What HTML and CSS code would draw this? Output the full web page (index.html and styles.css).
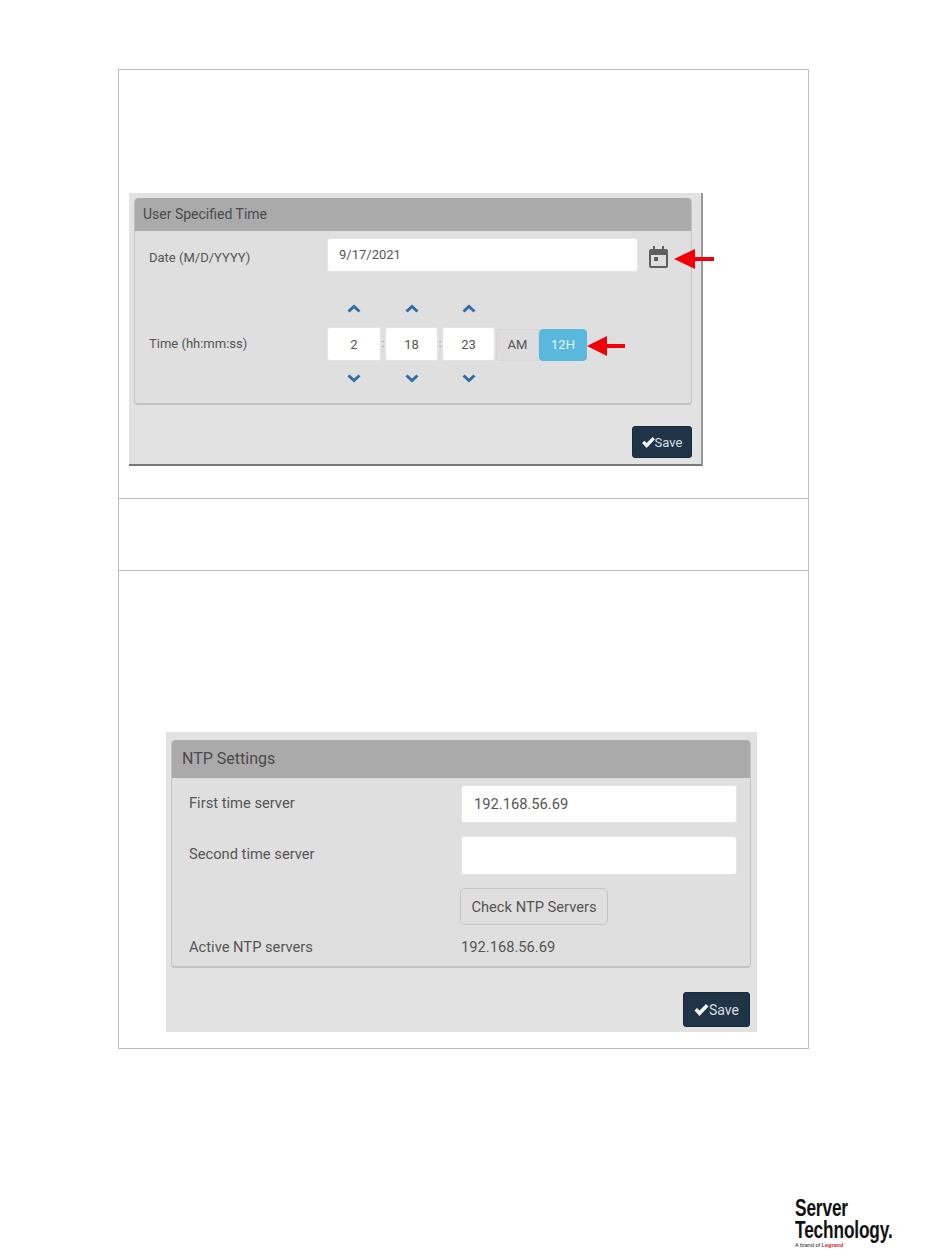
FILE: index.html
```html
<!DOCTYPE html>
<html lang="en">
<head>
    <meta charset="UTF-8">
    <title>User Specified Time and NTP Settings</title>
    <link rel="stylesheet" href="styles.css">
</head>
<body>
    <div class="frame">
        <div class="row row-first">
            <div class="shot shot-time">
                <div class="panel">
                    <div class="panel-head">User Specified Time</div>
                    <div class="panel-body">
                        <div class="date-row">
                            <label class="label">Date (M/D/YYYY)</label>
                            <input class="field" type="text" value="9/17/2021">
                            <svg class="cal" viewBox="0 0 19 22" width="19" height="22">
                                <path fill="#5f5f5f" d="M4 0h2v3h7V0h2v3h2a2 2 0 0 1 2 2v15a2 2 0 0 1-2 2H2a2 2 0 0 1-2-2V5a2 2 0 0 1 2-2h2zM2 9v11h15V9z"/>
                                <rect fill="#5f5f5f" x="5" y="11" width="4" height="4"/>
                            </svg>
                        </div>
                        <div class="time-row">
                            <label class="label">Time (hh:mm:ss)</label>
                            <div class="spin spin-wide">
                                <svg class="chev" viewBox="0 0 14 9" width="14" height="9"><path d="M1.500 7.500 7 2.500l5.500 5"/></svg>
                                <input class="field field-num" type="text" value="2">
                                <svg class="chev" viewBox="0 0 14 9" width="14" height="9"><path d="M1.500 1.500 7 6.500l5.500-5"/></svg>
                            </div>
                            <span class="sep">:</span>
                            <div class="spin">
                                <svg class="chev" viewBox="0 0 14 9" width="14" height="9"><path d="M1.500 7.500 7 2.500l5.500 5"/></svg>
                                <input class="field field-num" type="text" value="18">
                                <svg class="chev" viewBox="0 0 14 9" width="14" height="9"><path d="M1.500 1.500 7 6.500l5.500-5"/></svg>
                            </div>
                            <span class="sep">:</span>
                            <div class="spin">
                                <svg class="chev" viewBox="0 0 14 9" width="14" height="9"><path d="M1.500 7.500 7 2.500l5.500 5"/></svg>
                                <input class="field field-num" type="text" value="23">
                                <svg class="chev" viewBox="0 0 14 9" width="14" height="9"><path d="M1.500 1.500 7 6.500l5.500-5"/></svg>
                            </div>
                            <button class="btn-am" type="button">AM</button>
                            <button class="btn-12h" type="button">12H</button>
                        </div>
                    </div>
                </div>
                <div class="actions">
                    <button class="btn-save" type="button">
                        <svg class="tick" viewBox="0 0 14 12" width="13" height="11"><path d="M0 6.500 2.500 4l2.500 2.500L11.500 0 14 2.500 5 12z"/></svg>Save
                    </button>
                </div>
                <svg class="arrow arrow-cal" viewBox="0 0 40 20" width="40" height="20"><path d="M0 10 21 0v8h19v4H21v8z"/></svg>
                <svg class="arrow arrow-12h" viewBox="0 0 38 20" width="38" height="20"><path d="M0 10 20 0v8h18v4H20v8z"/></svg>
            </div>
        </div>
        <div class="row row-second"></div>
        <div class="row row-third">
            <div class="shot shot-ntp">
                <div class="panel">
                    <div class="panel-head">NTP Settings</div>
                    <div class="ntp-grid">
                        <label class="label">First time server</label>
                        <input class="field field-ntp" type="text" value="192.168.56.69">
                        <label class="label">Second time server</label>
                        <input class="field field-ntp field-tall" type="text">
                        <span></span>
                        <div><button class="btn-check" type="button">Check NTP Servers</button></div>
                        <span class="label label-active">Active NTP servers</span>
                        <span class="value">192.168.56.69</span>
                    </div>
                </div>
                <div class="actions">
                    <button class="btn-save" type="button">
                        <svg class="tick" viewBox="0 0 14 12" width="15" height="12"><path d="M0 6.500 2.500 4l2.500 2.500L11.500 0 14 2.500 5 12z"/></svg>Save
                    </button>
                </div>
            </div>
        </div>
    </div>
    <div class="logo">
        <div class="logo-name">Server<br>Technology.</div>
        <div class="logo-tag">A brand of <b>Legrand</b></div>
    </div>
</body>
</html>
```

FILE: styles.css
```css
body {
    margin: 0;
    background-color: #fff;
    font-family: Roboto, "Liberation Sans", sans-serif;
    color: #555;
    overflow: hidden;
}
.frame {
    box-sizing: border-box;
    width: 691px;
    margin: 69px 0 0 118px;
    border: 1px solid #bdbdbd;
}
.row-first {
    height: 428px;
    padding: 123px 0 0 10px;
    box-sizing: border-box;
}
.row-second {
    height: 71px;
    border-top: 1px solid #bdbdbd;
    border-bottom: 1px solid #bdbdbd;
}
.row-third {
    height: 477px;
    padding: 161px 0 0 47px;
    box-sizing: border-box;
}
.shot {
    position: relative;
    box-sizing: border-box;
    background-color: #e2e2e2;
}
.shot-time {
    width: 574px;
    height: 273px;
    padding: 5px 9px 0 5px;
    border-right: 2px solid #999;
    border-bottom: 2px solid #777;
}
.shot-ntp {
    width: 591px;
    height: 300px;
    padding: 8px 6px 0 5px;
}
.panel {
    background-color: #dfdfdf;
    border: 1px solid #c4c4c4;
    border-top: none;
    border-bottom: 2px solid #c2c2c2;
    border-radius: 4px;
}
.panel-head {
    height: 33px;
    padding-left: 8px;
    background-color: #aaa;
    border-radius: 4px 4px 0 0;
    font-size: 14px;
    line-height: 33px;
    color: #4a4a4a;
}
.shot-ntp .panel-head {
    height: 38px;
    padding-left: 10px;
    font-size: 16px;
    line-height: 38px;
}
.panel-body {
    padding: 7px 0 16px 14px;
}
.label {
    font-size: 13px;
    color: #555;
}
.date-row {
    display: flex;
    align-items: center;
}
.shot-time .label {
    width: 178px;
    flex-shrink: 0;
}
.date-row .label {
    margin-top: 4px;
}
.field {
    box-sizing: border-box;
    height: 34px;
    padding: 0 11px;
    border: 1px solid #e4e4e4;
    border-radius: 3px;
    background-color: #fff;
    font-family: inherit;
    font-size: 13px;
    color: #555;
}
.date-row .field {
    width: 311px;
    padding-bottom: 2px;
}
.cal {
    margin: 4px 0 0 11px;
}
.time-row {
    display: flex;
    align-items: center;
    margin-top: 28px;
}
.spin {
    display: flex;
    flex-direction: column;
    align-items: center;
    width: 53px;
}
.spin-wide {
    width: 54px;
}
.chev {
    display: block;
}
.chev:first-child {
    margin: 4px 0 14px;
}
.chev:last-child {
    margin: 13px 0 4px;
}
.chev path {
    fill: none;
    stroke: #2f6ea5;
    stroke-width: 3;
}
.field-num {
    width: 100%;
    padding: 0;
    text-align: center;
}
.sep {
    width: 4px;
    font-size: 11px;
    text-align: center;
    color: #888;
}
.btn-am,
.btn-12h {
    box-sizing: border-box;
    height: 32px;
    margin-top: 2px;
    padding: 0;
    border: 1px solid #d6d6d6;
    font-family: inherit;
    font-size: 13px;
}
.btn-am {
    width: 43px;
    margin-left: 1px;
    background-color: #ddd;
    border-radius: 3px 0 0 3px;
    color: #555;
}
.btn-12h {
    width: 48px;
    background-color: #58b9dc;
    border-color: #58b9dc;
    border-radius: 4px;
    color: #e8f6fb;
}
.actions {
    display: flex;
    justify-content: flex-end;
}
.shot-time .actions {
    margin-top: 21px;
}
.shot-ntp .actions {
    margin-top: 24px;
    padding-right: 1px;
}
.btn-save {
    display: flex;
    align-items: center;
    justify-content: center;
    box-sizing: border-box;
    width: 60px;
    height: 32px;
    padding: 0;
    border: 1px solid #16283a;
    border-radius: 3px;
    background-color: #1f3447;
    font-family: inherit;
    font-size: 13px;
    color: #d8dde2;
}
.shot-ntp .btn-save {
    width: 67px;
    height: 35px;
    font-size: 14px;
}
.tick {
    fill: #f4f4f4;
    flex-shrink: 0;
}
.arrow {
    position: absolute;
    fill: #f00008;
}
.arrow-cal {
    left: 545px;
    top: 56px;
}
.arrow-12h {
    left: 458px;
    top: 143px;
}
.ntp-grid {
    display: grid;
    grid-template-columns: 273px 276px;
    align-items: center;
    row-gap: 13px;
    padding: 7px 0 10px 17px;
}
.ntp-grid .label {
    margin-bottom: 3px;
    font-size: 14.700px;
}
.ntp-grid .label-active {
    margin-bottom: 0;
}
.field-ntp {
    width: 100%;
    height: 38px;
    margin-left: -1px;
    padding: 0 12px;
    font-size: 14.700px;
}
.field-tall {
    height: 39px;
}
.btn-check {
    box-sizing: border-box;
    width: 148px;
    height: 37px;
    margin-left: -2px;
    padding: 0;
    background-color: #dfdfdf;
    border: 1px solid #c6c6c6;
    border-radius: 5px;
    font-family: inherit;
    font-size: 14.700px;
    color: #555;
}
.value {
    margin-left: -1px;
    font-size: 14.700px;
}
.logo {
    margin: 148px 0 0 795px;
    color: #111;
}
.logo-name {
    width: 132px;
    font-family: "Liberation Sans", sans-serif;
    font-size: 24px;
    font-weight: 700;
    line-height: 21.500px;
    letter-spacing: -0.2px;
    transform: scaleX(0.72);
    transform-origin: left top;
}
.logo-tag {
    margin-top: 2px;
    font-family: "Liberation Sans", sans-serif;
    font-size: 5.500px;
    line-height: 6px;
}
.logo-tag b {
    color: #d8202a;
}
```
